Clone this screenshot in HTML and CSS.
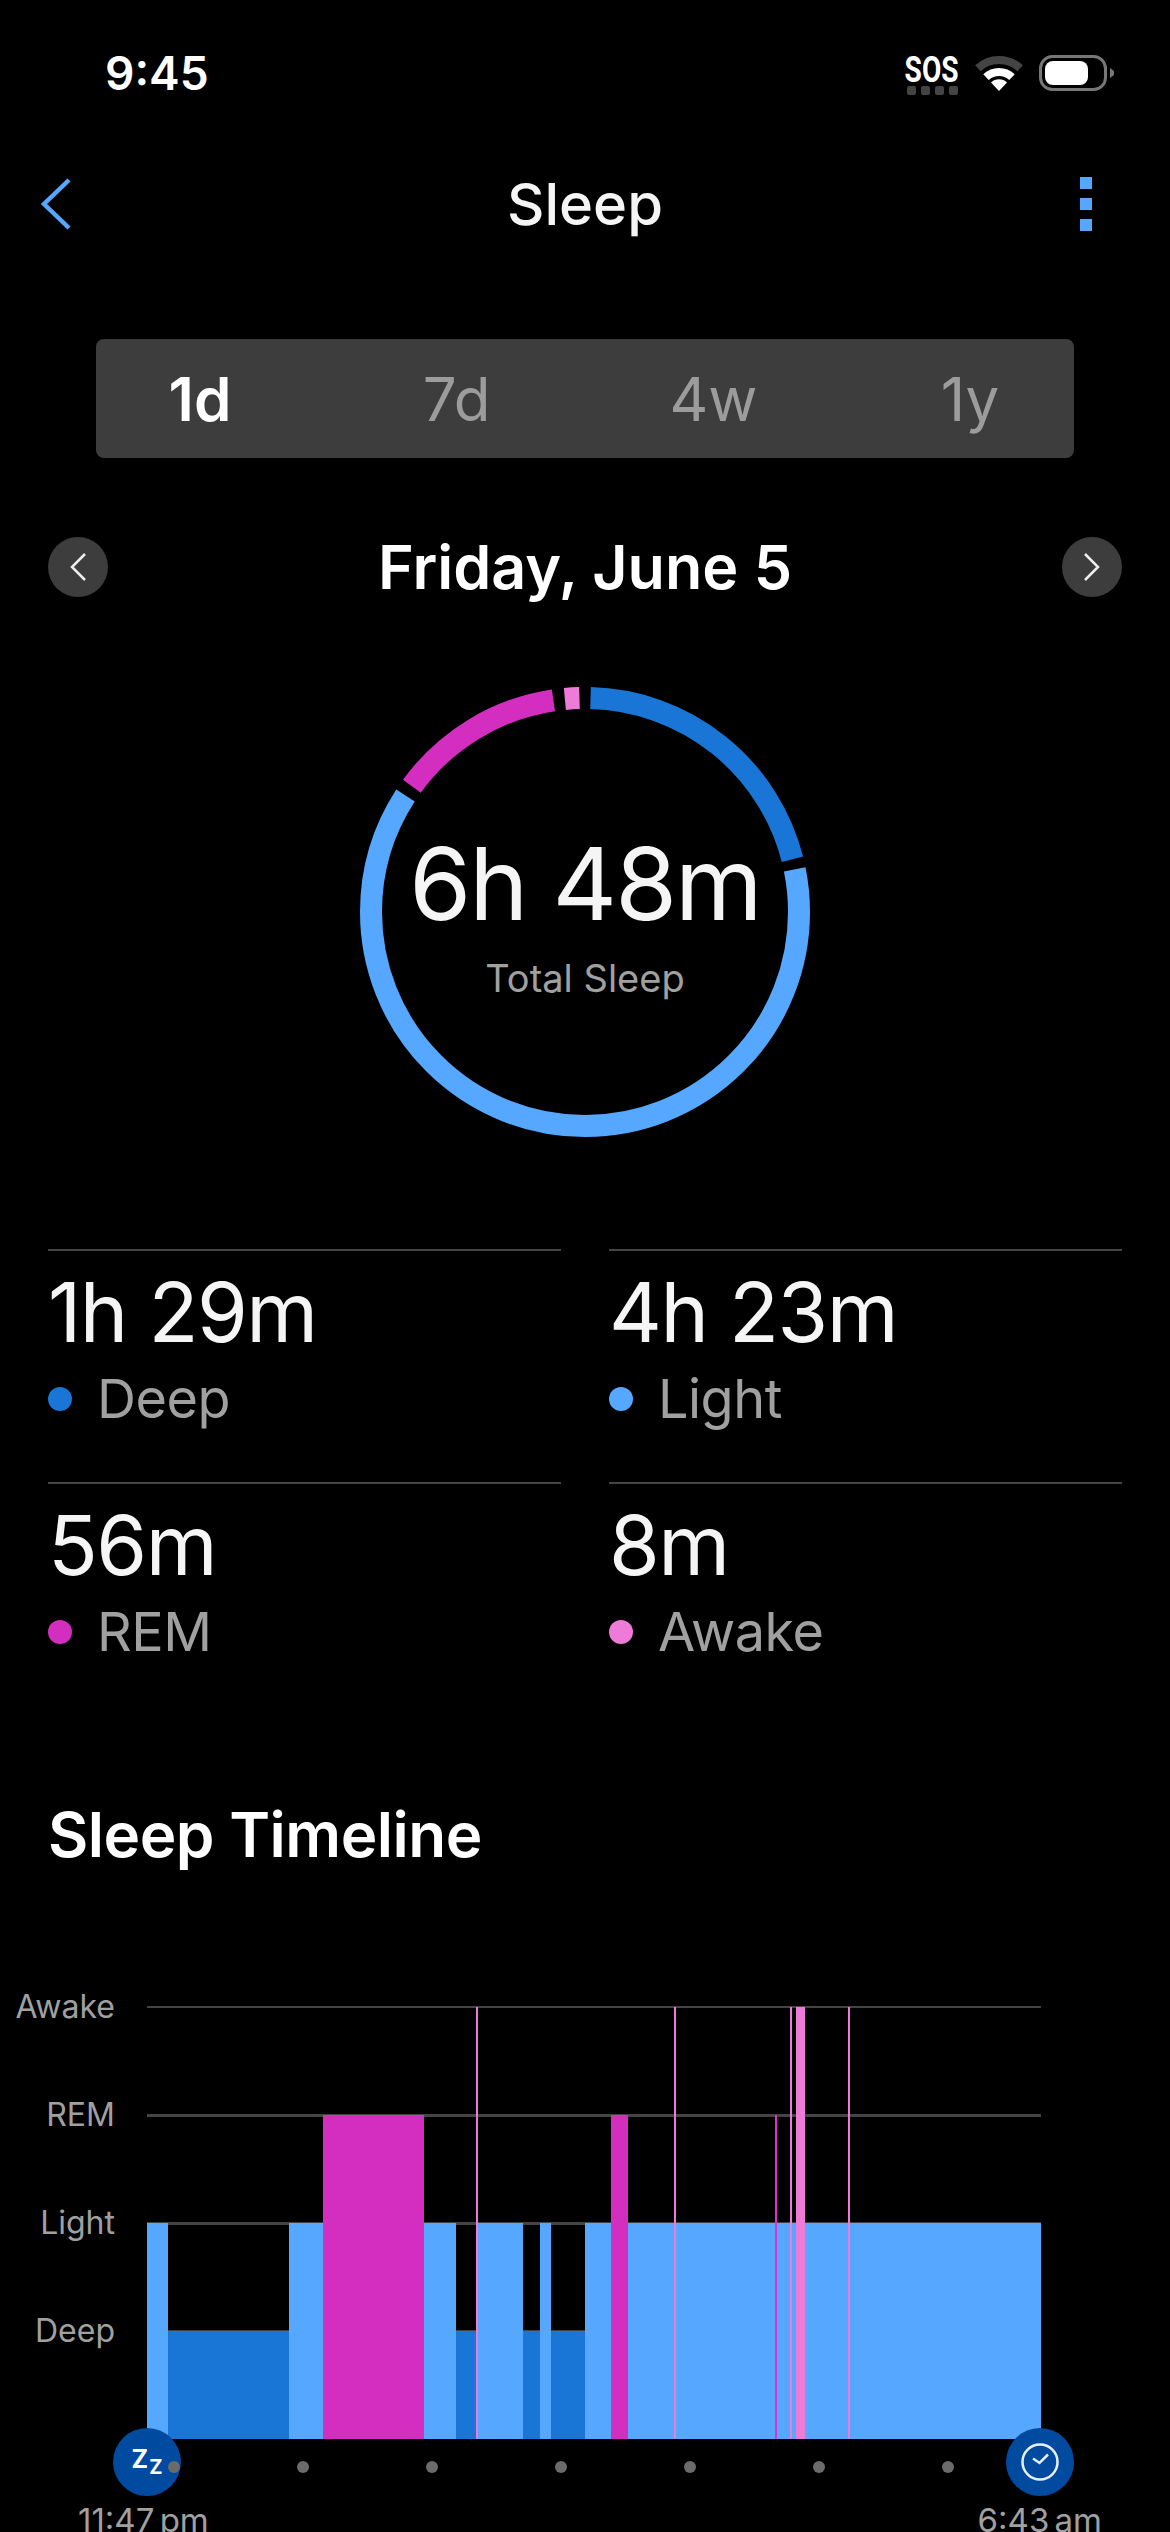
FILE: index.html
```html
<!DOCTYPE html>
<html lang="en">
<head>
    <meta charset="UTF-8">
    <title>Sleep</title>
    <link rel="stylesheet" href="styles.css">
</head>
<body>

<div class="status-bar">
    <span class="status-time">9:45</span>
    <div class="status-icons">
        <div class="sos">
            <span class="sos-text">SOS</span>
            <div class="sos-dots"><i></i><i></i><i></i><i></i></div>
        </div>
        <svg class="wifi" width="48" height="35" viewBox="0 0 48 35">
            <path d="M2.9 12.3A31 31 0 0 1 45.1 12.3" fill="none" stroke="#444" stroke-width="8"/>
            <path d="M11 21.1A19 19 0 0 1 37 21.1" fill="none" stroke="#fff" stroke-width="8"/>
            <path d="M24 35L16 26.5A11.5 11.5 0 0 1 32 26.5Z" fill="#fff"/>
        </svg>
        <svg class="battery" width="76" height="36" viewBox="0 0 76 36">
            <rect x="1.5" y="1.5" width="65" height="33" rx="12" fill="none" stroke="#777" stroke-width="3"/>
            <rect x="6" y="6" width="43" height="24" rx="8" fill="#fff"/>
            <path d="M71 13L75 16V20L71 23Z" fill="#777"/>
        </svg>
    </div>
</div>

<header class="nav">
    <svg class="nav-back" width="30" height="52" viewBox="0 0 30 52">
        <path d="M28 2L3 26L28 50" fill="none" stroke="#55a7ff" stroke-width="4.5"/>
    </svg>
    <h1 class="nav-title">Sleep</h1>
    <div class="nav-menu"><i></i><i></i><i></i></div>
</header>

<div class="range-tabs">
    <span class="range-tab active">1d</span>
    <span class="range-tab">7d</span>
    <span class="range-tab">4w</span>
    <span class="range-tab">1y</span>
</div>

<div class="date-row">
    <div class="date-arrow">
        <svg width="20" height="30" viewBox="0 0 20 30"><path d="M17 2L4 15L17 28" fill="none" stroke="#eee" stroke-width="2.5"/></svg>
    </div>
    <h2 class="date-title">Friday, June 5</h2>
    <div class="date-arrow">
        <svg width="20" height="30" viewBox="0 0 20 30"><path d="M3 2L16 15L3 28" fill="none" stroke="#eee" stroke-width="2.5"/></svg>
    </div>
</div>

<div class="ring">
    <svg class="ring-svg" width="450" height="450" viewBox="0 0 450 450">
        <g transform="rotate(-90 225 225)" fill="none" stroke-width="22">
            <circle class="ring-deep" cx="225" cy="225" r="214" pathLength="360" stroke-dasharray="74.2 360" stroke-dashoffset="-1.5"/>
            <circle class="ring-light" cx="225" cy="225" r="214" pathLength="360" stroke-dasharray="224.5 360" stroke-dashoffset="-78.5"/>
            <circle class="ring-rem" cx="225" cy="225" r="214" pathLength="360" stroke-dasharray="45.5 360" stroke-dashoffset="-306"/>
            <circle class="ring-awake" cx="225" cy="225" r="214" pathLength="360" stroke-dasharray="3.9 360" stroke-dashoffset="-354.6"/>
        </g>
    </svg>
    <div class="ring-center">
        <div class="ring-value">6h 48m</div>
        <div class="ring-label">Total Sleep</div>
    </div>
</div>

<div class="stats">
    <div class="stat">
        <div class="stat-value">1h 29m</div>
        <div class="stat-label"><i class="dot dot-deep"></i>Deep</div>
    </div>
    <div class="stat">
        <div class="stat-value">4h 23m</div>
        <div class="stat-label"><i class="dot dot-light"></i>Light</div>
    </div>
    <div class="stat">
        <div class="stat-value">56m</div>
        <div class="stat-label"><i class="dot dot-rem"></i>REM</div>
    </div>
    <div class="stat">
        <div class="stat-value">8m</div>
        <div class="stat-label"><i class="dot dot-awake"></i>Awake</div>
    </div>
</div>

<h2 class="timeline-title">Sleep Timeline</h2>

<div class="chart">
    <div class="chart-labels">
        <span>Awake</span>
        <span>REM</span>
        <span>Light</span>
        <span>Deep</span>
    </div>
    <svg class="chart-plot" width="894" height="433" viewBox="147 2006 894 433" shape-rendering="crispEdges">
        <!-- grid lines -->
        <rect class="grid" x="147" y="2006" width="894" height="2"/>
        <rect class="grid" x="147" y="2114" width="894" height="3"/>
        <rect class="grid" x="147" y="2222" width="894" height="3"/>
        <rect class="grid" x="147" y="2330" width="894" height="2"/>
        <!-- stages, x = time -->
        <rect class="bar-light" x="147" y="2223" width="21" height="216"/>
        <rect class="bar-deep" x="168" y="2331" width="121" height="108"/>
        <rect class="bar-light" x="289" y="2223" width="34" height="216"/>
        <rect class="bar-rem" x="323" y="2115" width="101" height="324"/>
        <rect class="bar-light" x="424" y="2223" width="32" height="216"/>
        <rect class="bar-deep" x="456" y="2331" width="20" height="108"/>
        <rect class="bar-light" x="478" y="2223" width="45" height="216"/>
        <rect class="bar-deep" x="523" y="2331" width="17" height="108"/>
        <rect class="bar-light" x="540" y="2223" width="11" height="216"/>
        <rect class="bar-deep" x="551" y="2331" width="34" height="108"/>
        <rect class="bar-light" x="585" y="2223" width="456" height="216"/>
        <rect class="bar-rem" x="611" y="2115" width="17" height="324"/>
        <rect class="bar-rem-thin" x="775" y="2115" width="2" height="324"/>
        <rect class="bar-awake" x="476" y="2007" width="2" height="432"/>
        <rect class="bar-awake" x="674" y="2007" width="2" height="432"/>
        <rect class="bar-awake" x="790" y="2007" width="2" height="432"/>
        <rect class="bar-awake" x="796" y="2007" width="9" height="432"/>
        <rect class="bar-awake" x="848" y="2007" width="2" height="432"/>
    </svg>
</div>

<div class="time-axis">
    <div class="marker marker-start">
        <span class="zz"><span class="zz-big">Z</span><span class="zz-small">Z</span></span>
    </div>
    <div class="marker marker-end">
        <svg width="42" height="42" viewBox="0 0 42 42">
            <circle cx="21" cy="21" r="17.5" fill="none" stroke="#e8eef8" stroke-width="2.5"/>
            <path d="M14 17.5L20.5 22L29 13.5" fill="none" stroke="#e8eef8" stroke-width="2.5"/>
        </svg>
    </div>
    <div class="ticks"><i></i><i></i><i></i><i></i><i></i><i></i><i></i></div>
    <div class="time-labels">
        <span>11:47 pm</span>
        <span>6:43 am</span>
    </div>
</div>

</body>
</html>
```
FILE: styles.css
```css
* {
    box-sizing: border-box;
}
html, body {
    height: 2532px;
}
body {
    margin: 0;
    width: 1170px;
    overflow: hidden;
    background-color: #000;
    color: #f5f5f5;
    font-family: Inter, "Liberation Sans", sans-serif;
}
h1, h2 {
    margin: 0;
}
i {
    display: block;
}

/* status bar */
.status-bar {
    height: 146px;
    padding: 0 55px 0 105px;
    display: flex;
    align-items: center;
    justify-content: space-between;
}
.status-time {
    font-size: 46px;
    font-weight: 600;
    color: #fff;
}
.status-icons {
    display: flex;
    align-items: center;
    gap: 16px;
}
.sos {
    width: 54px;
    display: flex;
    flex-direction: column;
    align-items: center;
    gap: 2px;
    margin-top: 4px;
}
.sos-text {
    font-family: Roboto, sans-serif;
    font-size: 36px;
    line-height: 28px;
    font-weight: 700;
    color: #fff;
    transform: scaleX(0.78);
}
.sos-dots {
    display: flex;
    gap: 5px;
}
.sos-dots i {
    width: 9px;
    height: 9px;
    border-radius: 2px;
    background-color: #444;
}

/* nav */
.nav {
    height: 116px;
    padding: 0 41px;
    display: grid;
    grid-template-columns: 1fr auto 1fr;
    align-items: center;
}
.nav-title {
    font-size: 58px;
    font-weight: 500;
}
.nav-menu {
    justify-self: end;
    margin-right: 37px;
    display: flex;
    flex-direction: column;
    gap: 9px;
}
.nav-menu i {
    width: 12px;
    height: 12px;
    background-color: #55a7ff;
}

/* range tabs */
.range-tabs {
    margin: 77px 96px 0;
    height: 119px;
    padding: 0 74px;
    background-color: #3d3d3d;
    border-radius: 8px;
    display: flex;
    align-items: center;
    justify-content: space-between;
}
.range-tab {
    width: 60px;
    font-size: 60px;
    white-space: nowrap;
    color: #9c9c9c;
    display: flex;
    justify-content: center;
}
.range-tab.active {
    font-weight: 600;
    color: #fff;
}

/* date */
.date-row {
    margin-top: 79px;
    padding: 0 48px;
    display: flex;
    align-items: center;
    justify-content: space-between;
}
.date-arrow {
    width: 60px;
    height: 60px;
    border-radius: 50%;
    background-color: #3d3d3d;
    display: flex;
    align-items: center;
    justify-content: center;
}
.date-title {
    font-size: 61px;
    line-height: 60px;
    font-weight: 600;
    color: #fff;
}

/* ring */
.ring {
    margin: 90px auto 0;
    width: 450px;
    height: 450px;
    display: grid;
}
.ring-svg, .ring-center {
    grid-area: 1 / 1;
}
.ring-deep { stroke: #1a76d6; }
.ring-light { stroke: #55a7ff; }
.ring-rem { stroke: #d42ec0; }
.ring-awake { stroke: #ef7bd8; }
.ring-center {
    text-align: center;
    padding-top: 135px;
}
.ring-value {
    font-size: 100px;
    line-height: 124px;
    font-weight: 400;
    letter-spacing: -2px;
}
.ring-label {
    font-size: 38px;
    line-height: 46px;
    margin-top: 9px;
    color: #a0a0a0;
}

/* stats */
.stats {
    margin-top: 112px;
    padding: 0 48px;
    display: grid;
    grid-template-columns: 1fr 1fr;
    column-gap: 48px;
}
.stat {
    height: 233px;
    border-top: 2px solid #444;
}
.stat-value {
    font-size: 82px;
    line-height: 100px;
    margin-top: 12px;
    letter-spacing: -1.5px;
}
.stat-label {
    margin-top: 3px;
    display: flex;
    align-items: center;
    gap: 25px;
    font-size: 54px;
    line-height: 66px;
    letter-spacing: -0.5px;
    color: #a0a0a0;
}
.dot {
    width: 24px;
    height: 24px;
    border-radius: 50%;
}
.dot-deep { background-color: #1a76d6; }
.dot-light { background-color: #55a7ff; }
.dot-rem { background-color: #d42ec0; }
.dot-awake { background-color: #ef7bd8; }

/* timeline */
.timeline-title {
    margin-top: 84px;
    padding-left: 48px;
    font-size: 62px;
    line-height: 72px;
    font-weight: 600;
    letter-spacing: -0.5px;
    color: #fff;
}
.chart {
    margin-top: 82px;
    display: flex;
}
.chart-labels {
    width: 115px;
    display: flex;
    flex-direction: column;
    text-align: right;
    font-size: 32px;
    line-height: 108px;
    color: #a0a0a0;
}
.chart-plot {
    display: block;
    margin: 53px 0 0 32px;
}
.grid { fill: #444; }
.bar-light { fill: #55a7ff; }
.bar-deep { fill: #1a76d6; }
.bar-rem { fill: #d42ec0; }
.bar-rem-thin { fill: #e22fd0; }
.bar-awake { fill: #ef7bd8; }

.time-axis {
    position: relative;
}
.marker {
    position: absolute;
    top: -11px;
    width: 68px;
    height: 68px;
    border-radius: 50%;
    background-color: #004a9f;
    display: flex;
    align-items: center;
    justify-content: center;
}
.marker-start { left: 113px; }
.marker-end { left: 1006px; }
.zz {
    display: flex;
    align-items: flex-end;
    font-weight: 700;
    color: #fff;
    line-height: 1;
}
.zz-big {
    font-size: 25px;
    margin-bottom: 5px;
}
.zz-small {
    font-size: 20px;
    margin-left: 1px;
}
.ticks {
    position: relative;
    padding: 22px 0 0 168px;
    display: flex;
    gap: 117px;
}
.ticks i {
    width: 12px;
    height: 12px;
    border-radius: 50%;
    background-color: #6b6b6b;
}
.time-labels {
    margin-top: 27px;
    padding: 0 68px 0 78px;
    display: flex;
    justify-content: space-between;
    font-size: 33px;
    line-height: 40px;
    word-spacing: -4px;
    color: #a0a0a0;
}
```
